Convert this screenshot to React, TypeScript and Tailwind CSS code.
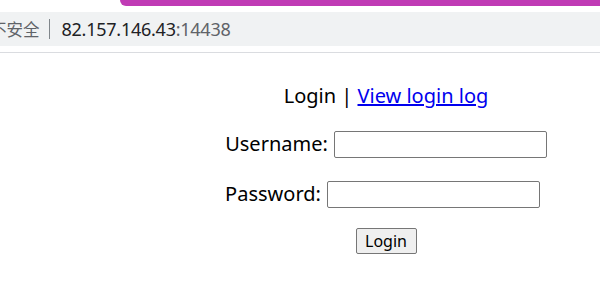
export default function App() {
  return (
    <div className="w-[600px] h-[290px] bg-white overflow-hidden font-['Noto_Sans',sans-serif] text-black">
      {/* browser chrome */}
      <div className="h-[6px] flex justify-end">
        <div className="w-[480px] h-full bg-[#c03bb5] rounded-bl-[8px]" />
      </div>
      <div className="mt-[6px] h-[34px] bg-[#f0f2f3] flex items-center">
        <span className="-ml-[10px] text-[16.5px] text-[#5f6368] font-['Noto_Sans_CJK_SC',sans-serif]">不安全</span>
        <span className="ml-[9px] w-px h-[20px] bg-[#80868b]" />
        <span className="ml-[12px] text-[18px] tracking-[-0.25px]">
          <span className="text-[#202124]">82.157.146.43</span>
          <span className="text-[#5f6368]">:14438</span>
        </span>
      </div>
      <div className="mt-[6px] h-[1px] bg-[#dadce0]" />

      {/* page */}
      <div className="pl-[172px] w-[600px]">
        <div className="w-[428px] flex flex-col items-center text-[20px]">
          <div className="mt-[30px] leading-[26px]">
            Login | <a href="#" className="text-[#0000ee] underline">View login log</a>
          </div>
          <div className="mt-[20px] flex items-center gap-[6px]">
            <span>Username:</span>
            <input className="w-[213px] h-[27px] border border-[#767676] rounded-[2px]" />
          </div>
          <div className="mt-[20px] flex items-center gap-[6px] pr-[7px]">
            <span>Password:</span>
            <input type="password" className="w-[213px] h-[27px] border border-[#767676] rounded-[2px]" />
          </div>
          <button className="mt-[19px] w-[61px] h-[26px] bg-[#efefef] border border-[#767676] rounded-[2px] text-[16px] leading-[20px] font-['Noto_Sans',sans-serif]">
            Login
          </button>
        </div>
      </div>
    </div>
  )
}
